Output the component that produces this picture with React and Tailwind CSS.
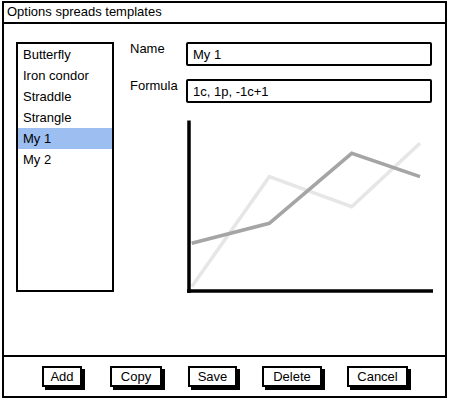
import React from "react";

const items = ["Butterfly", "Iron condor", "Straddle", "Strangle", "My 1", "My 2"];

function Btn({ label, w, ml }) {
  return (
    <div
      className={`h-[21px] border-2 border-black bg-white flex items-center justify-center text-[13px] leading-none shadow-[3px_3px_0_#000] ${w} ${ml}`}
    >
      {label}
    </div>
  );
}

export default function App() {
  return (
    <div
      className="w-[450px] h-[400px] bg-white pt-[1px] pl-[2px] text-black"
      style={{ fontFamily: '"Liberation Sans", Arial, sans-serif' }}
    >
      <div className="w-[445px] h-[397px] border-2 border-black flex flex-col">
        <div className="h-[21px] shrink-0 border-b-2 border-black flex items-center pl-[3px] text-[13px] leading-none pb-[2px]">
          Options spreads templates
        </div>
        <div className="flex-1 flex items-start">
          <div className="ml-[12px] mt-[18px] w-[98px] h-[250px] border-2 border-black flex flex-col">
            {items.map((it) => (
              <div
                key={it}
                className={`h-[21px] shrink-0 flex items-center pl-[5px] text-[13px] leading-none ${
                  it === "My 1" ? "bg-[#9cbef0]" : ""
                }`}
              >
                {it}
              </div>
            ))}
          </div>
          <div className="ml-[16px] mt-[17px] flex flex-col">
            <div className="flex items-start">
              <div className="w-[56px] h-[16px] text-[13px] leading-[16px]">Name</div>
              <div className="mt-[1px] w-[246px] h-[24px] border-2 border-black rounded-[2px] flex items-center pl-[5px] text-[13px] leading-none">
                My 1
              </div>
            </div>
            <div className="flex items-start mt-[12px]">
              <div className="w-[56px] h-[16px] text-[13px] leading-[16px]">Formula</div>
              <div className="mt-[1px] w-[246px] h-[24px] border-2 border-black rounded-[2px] flex items-center pl-[5px] text-[13px] leading-none">
                1c, 1p, -1c+1
              </div>
            </div>
            <div className="ml-[57px] mt-[17px] w-[246px]">
              <svg width="246" height="174" viewBox="0 0 246 174" className="block">
                <polyline
                  points="4.7,166.7 82.3,56.7 164.7,86.7 233,23.3"
                  fill="none"
                  stroke="#e6e6e6"
                  strokeWidth="3.5"
                  strokeLinejoin="miter"
                />
                <polyline
                  points="4.7,123.3 82.3,103.3 164.7,33.3 233,56.7"
                  fill="none"
                  stroke="#a5a5a5"
                  strokeWidth="3.5"
                  strokeLinejoin="miter"
                />
                <line x1="2" y1="0.5" x2="2" y2="173" stroke="#000" strokeWidth="3.5" />
                <line x1="0" y1="171" x2="246" y2="171" stroke="#000" strokeWidth="3.5" />
              </svg>
            </div>
          </div>
        </div>
        <div className="h-[41px] shrink-0 border-t-2 border-black flex items-start pt-[9px]">
          <Btn label="Add" w="w-[40px]" ml="ml-[38px]" />
          <Btn label="Copy" w="w-[52px]" ml="ml-[28px]" />
          <Btn label="Save" w="w-[49px]" ml="ml-[26px]" />
          <Btn label="Delete" w="w-[60px]" ml="ml-[25px]" />
          <Btn label="Cancel" w="w-[61px]" ml="ml-[25px]" />
        </div>
      </div>
    </div>
  );
}
